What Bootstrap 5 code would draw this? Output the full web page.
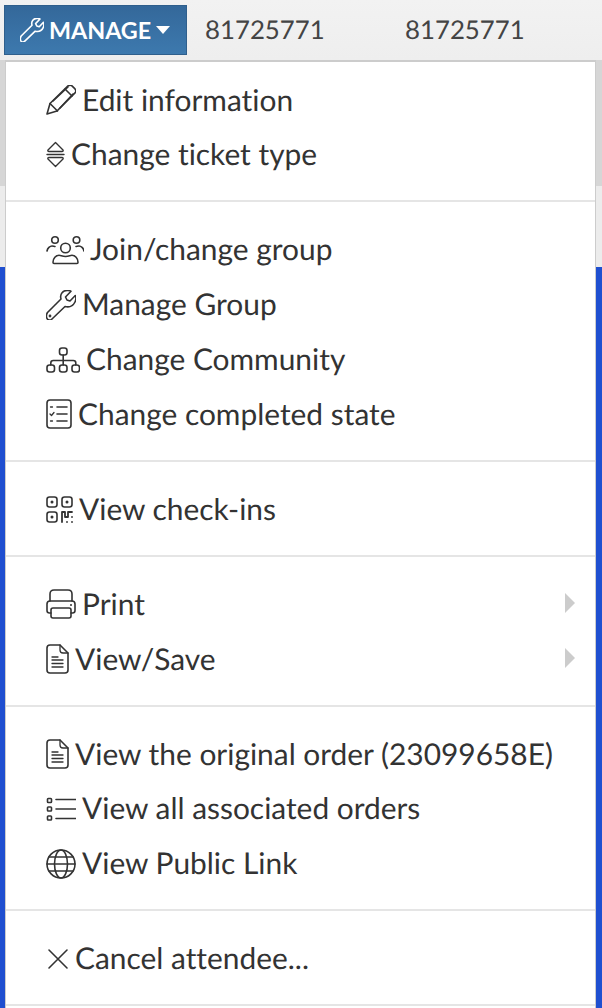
<!DOCTYPE html>
<html lang="en">
<head>
<meta charset="utf-8">
<title>Manage</title>
<link href="https://cdn.jsdelivr.net/npm/bootstrap@5.3.0/dist/css/bootstrap.min.css" rel="stylesheet">
<style>
html,body{height:1008px;overflow:hidden;}
body{font-family:Lato,"Liberation Sans",sans-serif;background:#1f4fd0;position:relative;color:#333;font-variant-ligatures:none;text-rendering:geometricPrecision;}
.topbar{height:60px;background:linear-gradient(#f2f2f2,#eeeeee);padding:5px 4px;gap:18px;}
.managebtn{flex:none;height:50px;width:183px;background:linear-gradient(#34689a,#3d79ae);border:1px solid #2f5f8c;border-radius:0;color:#fff;font-size:23.3px;font-weight:700;padding:0 0 0 15px;gap:5px;}
.managebtn:hover{background:#3a73a6;color:#fff;}
.caretmark{width:0;height:0;border-left:7.500px solid transparent;border-right:7.500px solid transparent;border-top:8px solid #fff;}
.codeval{font-size:25.8px;color:#444;width:182px;flex:none;}
.bandgrey{height:126px;background:#d6d6d6;}
.bandlight{height:81px;background:#ececec;}
.actionmenu{position:absolute;left:5px;top:60px;width:591px;height:960px;margin:0;padding:9.500px 0 0;border:0;border-top:2px solid #ccc;border-left:1px solid #ccc;border-right:1px solid #ccc;border-radius:0;background:#fff;}
.actionmenu .dropdown-item{height:54.900px;padding:2px 0 0 40px;font-size:29.900px;color:#333;gap:6px;}
.actionmenu .dropdown-divider{height:2px;margin:19px 0;border:0;background:#e5e5e5;opacity:1;}
.ico{flex:none;fill:none;stroke:#333;stroke-width:1.6;stroke-linejoin:round;stroke-linecap:round;}
.btnico{flex:none;fill:none;stroke:#fff;stroke-width:2;stroke-linejoin:round;stroke-linecap:round;}
.subarrow{position:absolute;right:20px;top:50%;margin-top:-10px;border-left:10px solid #ccc;border-top:10px solid transparent;border-bottom:10px solid transparent;}
</style>
</head>
<body>
<div class="topbar d-flex align-items-center">
  <button type="button" class="btn managebtn d-flex align-items-center">
    <svg class="btnico" width="24" height="24" viewBox="0 0 30 30"><path d="M1.500 22.500 15 9C13.500 4 17 0 22 .5c1 .1 2.500.3 3 .8L19.500 7l1.500 3 3 1 5.300-5.500c.7 1.500.7 4.500-.3 6.500-2 4-6 5.500-10 4.500L6 29c-2 2-4.500 1-5.200-1-.8-2-.3-4 .7-5.500Z"/></svg>
    <span>MANAGE</span><span class="caretmark"></span>
  </button>
  <span class="codeval">81725771</span>
  <span class="codeval">81725771</span>
</div>
<div class="bandgrey"></div>
<div class="bandlight"></div>
<ul class="dropdown-menu show actionmenu list-unstyled">
  <li><a class="dropdown-item d-flex align-items-center" href="#">
    <svg class="ico" width="30" height="30" viewBox="0 0 30 30"><path d="M1 29 4 18.500 22 .9c1.500-1 3-1 4 0l3 3c1 1.200 1 2.800 0 4L11 26Z"/><path d="M19 4l7 7M4 18.500l7.500 7.500M7 16 22 2M14 23 27 9"/></svg>Edit information</a></li>
  <li><a class="dropdown-item d-flex align-items-center" href="#">
    <svg class="ico" width="19" height="27" viewBox="0 0 19 27"><path d="M9.500 1.500 2 9c-.5 1 0 1.500 1 1.500h13c1 0 1.500-.5 1-1.500ZM9.500 25.500 2 18c-.5-1 0-1.500 1-1.500h13c1 0 1.500.5 1 1.500ZM1 13.500h17" stroke-width="1.400"/></svg>Change ticket type</a></li>
  <li><hr class="dropdown-divider"></li>
  <li><a class="dropdown-item d-flex align-items-center" href="#">
    <svg class="ico" width="38" height="30" viewBox="0 0 38 30"><circle cx="9" cy="5" r="3.300"/><circle cx="30.500" cy="5" r="3.300"/><circle cx="19.500" cy="13" r="4.800"/><path d="M8 28.500h23c.8 0 1-.5 1-1.300 0-4-3-7-6-7-2 0-3 1.300-6.500 1.300S15 20.200 13 20.200c-3 0-6 3-6 7 0 .8.300 1.300 1 1.300ZM1 16c.5-3 3-5 5-5 1.500 0 2 .5 3 .5M38 16c-.5-3-3-5-5-5-1.500 0-2 .5-3 .5"/></svg>Join/change group</a></li>
  <li><a class="dropdown-item d-flex align-items-center" href="#">
    <svg class="ico" width="30" height="30" viewBox="0 0 30 30"><path d="M1.500 22.500 15 9C13.500 4 17 0 22 .5c1 .1 2.500.3 3 .8L19.500 7l1.500 3 3 1 5.300-5.500c.7 1.500.7 4.500-.3 6.500-2 4-6 5.500-10 4.500L6 29c-2 2-4.500 1-5.200-1-.8-2-.3-4 .7-5.500Z"/><circle cx="4" cy="26" r=".6"/></svg>Manage Group</a></li>
  <li><a class="dropdown-item d-flex align-items-center" href="#">
    <svg class="ico" width="34" height="26" viewBox="0 0 34 26"><rect x="13.500" y="1" width="7.500" height="7" rx="2.500"/><rect x="1" y="18" width="7.500" height="7" rx="2.500"/><rect x="13.500" y="18" width="7.500" height="7" rx="2.500"/><rect x="26" y="18" width="7.500" height="7" rx="2.500"/><path d="M17.200 8v10M4.800 18v-2c0-1.500 1-2.500 2.500-2.500h20c1.500 0 2.500 1 2.500 2.500v2"/></svg>Change Community</a></li>
  <li><a class="dropdown-item d-flex align-items-center" href="#">
    <svg class="ico" width="26" height="30" viewBox="0 0 26 30"><rect x="1" y="1" width="24" height="28" rx="3"/><path d="M11 8h10M11 15h10M11 22h10"/><path d="M4.500 8h2M4 15l1.500 1.500L8 13.500M4.500 22h2" stroke-width="1.300"/></svg>Change completed state</a></li>
  <li><hr class="dropdown-divider"></li>
  <li><a class="dropdown-item d-flex align-items-center" href="#">
    <svg class="ico" width="27" height="27" viewBox="0 0 27 27"><rect x="1" y="1" width="10" height="10" rx="2.500"/><rect x="16" y="1" width="10" height="10" rx="2.500"/><rect x="1" y="16" width="10" height="10" rx="2.500"/><path d="M6 6h.01M21 6h.01M6 21h.01" stroke-width="3"/><path d="M16 26V16h3v5h3v-5h4M21 26h.01M26 26h.01M26 21h.01" stroke-width="1.800"/></svg>View check-ins</a></li>
  <li><hr class="dropdown-divider"></li>
  <li class="position-relative"><a class="dropdown-item d-flex align-items-center" href="#">
    <svg class="ico" width="30" height="30" viewBox="0 0 30 30"><path d="M4 12V5c0-2.500 1.500-4 4-4h14c2.500 0 4 1.500 4 4v7"/><path d="M5 24H3.500C2 24 1 23 1 21.500V15c0-2 1-3 3-3h22c2 0 3 1 3 3v6.500c0 1.500-1 2.500-2.500 2.500H25"/><rect x="5" y="19" width="20" height="10" rx="2"/><path d="M25 16h.01" stroke-width="2"/></svg>Print</a><span class="subarrow"></span></li>
  <li class="position-relative"><a class="dropdown-item d-flex align-items-center" href="#">
    <svg class="ico" width="23" height="30" viewBox="0 0 23 30"><path d="M4 1h10l8 8v17c0 2-1 3-3 3H4c-2 0-3-1-3-3V4c0-2 1-3 3-3Z"/><path d="M14 1v5c0 2 1 3 3 3h5M6 16h11M6 19.500h11M6 23h11M6 13h6" stroke-width="1.300"/></svg>View/Save</a><span class="subarrow"></span></li>
  <li><hr class="dropdown-divider"></li>
  <li><a class="dropdown-item d-flex align-items-center" href="#">
    <svg class="ico" width="23" height="30" viewBox="0 0 23 30"><path d="M4 1h10l8 8v17c0 2-1 3-3 3H4c-2 0-3-1-3-3V4c0-2 1-3 3-3Z"/><path d="M14 1v5c0 2 1 3 3 3h5M6 16h11M6 19.500h11M6 23h11M6 13h6" stroke-width="1.300"/></svg>View the original order (23099658E)</a></li>
  <li><a class="dropdown-item d-flex align-items-center" href="#">
    <svg class="ico" width="30" height="24" viewBox="0 0 30 24"><rect x="1.500" y="1.500" width="4" height="4" rx=".8"/><rect x="1.500" y="10" width="4" height="4" rx=".8"/><rect x="1.500" y="19" width="4" height="4" rx=".8"/><path d="M10 2.500h19.500M10 12h19.500M10 21.500h19.500"/></svg>View all associated orders</a></li>
  <li><a class="dropdown-item d-flex align-items-center" href="#">
    <svg class="ico" width="30" height="30" viewBox="0 0 30 30"><circle cx="15" cy="15" r="14"/><ellipse cx="15" cy="15" rx="6.500" ry="14"/><path d="M1 15h28M3 8h24M3 22h24"/></svg>View Public Link</a></li>
  <li><hr class="dropdown-divider"></li>
  <li><a class="dropdown-item d-flex align-items-center" href="#">
    <svg class="ico" width="23" height="22" viewBox="0 0 23 22"><path d="M3 2l18 18M21 2 3 20"/></svg>Cancel attendee...</a></li>
  <li><hr class="dropdown-divider"></li>
</ul>
<script src="https://cdn.jsdelivr.net/npm/bootstrap@5.3.0/dist/js/bootstrap.bundle.min.js"></script>
</body>
</html>
